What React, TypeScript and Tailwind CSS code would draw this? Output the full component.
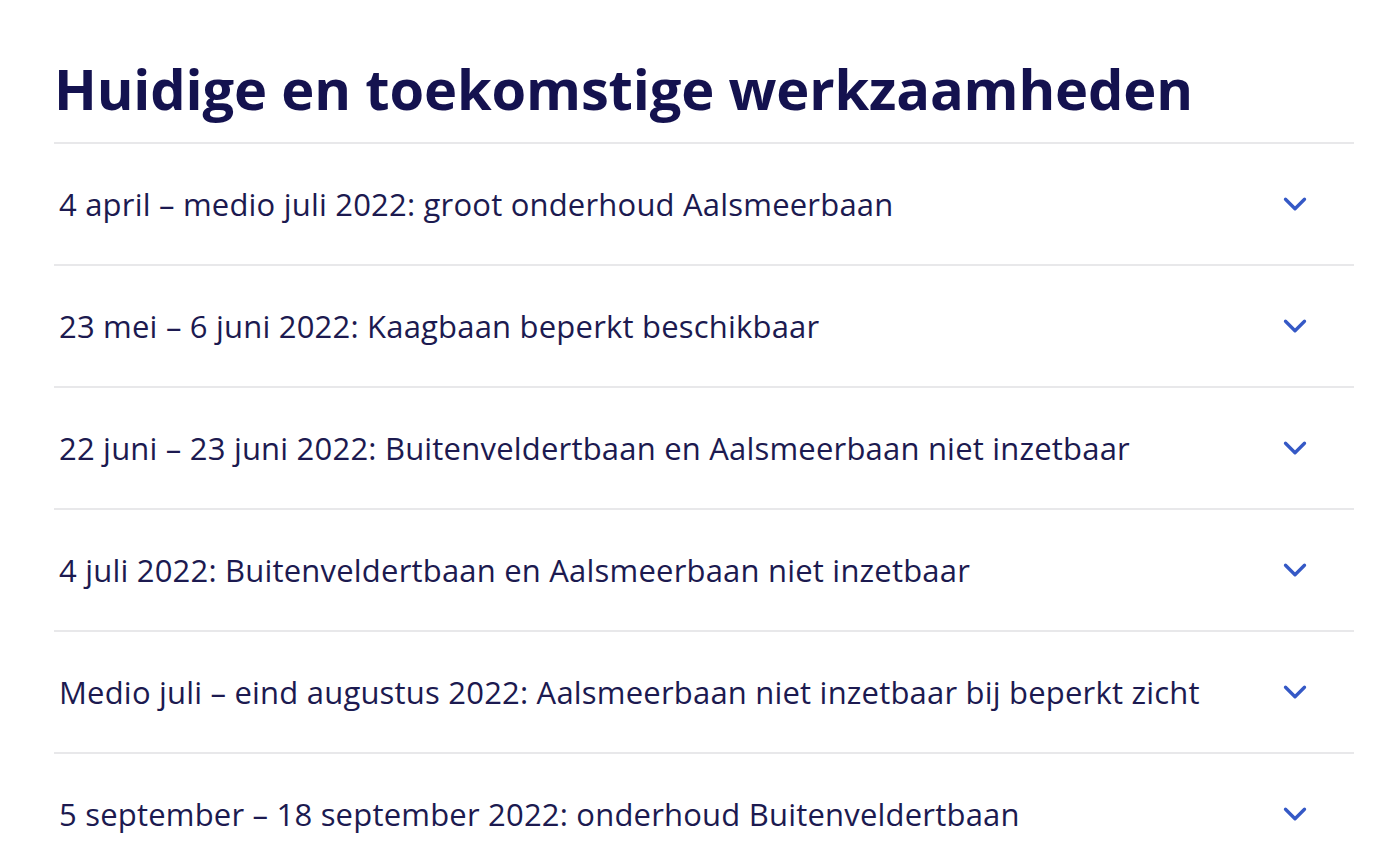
import { ChevronDown } from "lucide-react";

const items = [
  "4 april – medio juli 2022: groot onderhoud Aalsmeerbaan",
  "23 mei – 6 juni 2022: Kaagbaan beperkt beschikbaar",
  "22 juni – 23 juni 2022: Buitenveldertbaan en Aalsmeerbaan niet inzetbaar",
  "4 juli 2022: Buitenveldertbaan en Aalsmeerbaan niet inzetbaar",
  "Medio juli – eind augustus 2022: Aalsmeerbaan niet inzetbaar bij beperkt zicht",
  "5 september – 18 september 2022: onderhoud Buitenveldertbaan",
];

function App() {
  return (
    <main
      className="min-h-screen bg-white pl-[54px] pr-[30px] pt-[52px]"
      style={{ fontFamily: '"Open Sans", "Noto Sans", sans-serif' }}
    >
      <h1 className="text-[56px] leading-[72px] font-bold tracking-[-0.15px] text-[#14124f] pb-[18px]">
        Huidige en toekomstige werkzaamheden
      </h1>
      <ul>
        {items.map((item) => (
          <li
            key={item}
            className="flex items-center justify-between border-t-2 border-[#e8e8ea] h-[122px] pl-[5px] pr-[40px]"
          >
            <span className="text-[31px] tracking-[0.2px] text-[#1c1a50]">{item}</span>
            <ChevronDown className="w-[38px] h-[38px] text-[#3559c6]" strokeWidth={2.1} />
          </li>
        ))}
      </ul>
    </main>
  );
}

export default App;
